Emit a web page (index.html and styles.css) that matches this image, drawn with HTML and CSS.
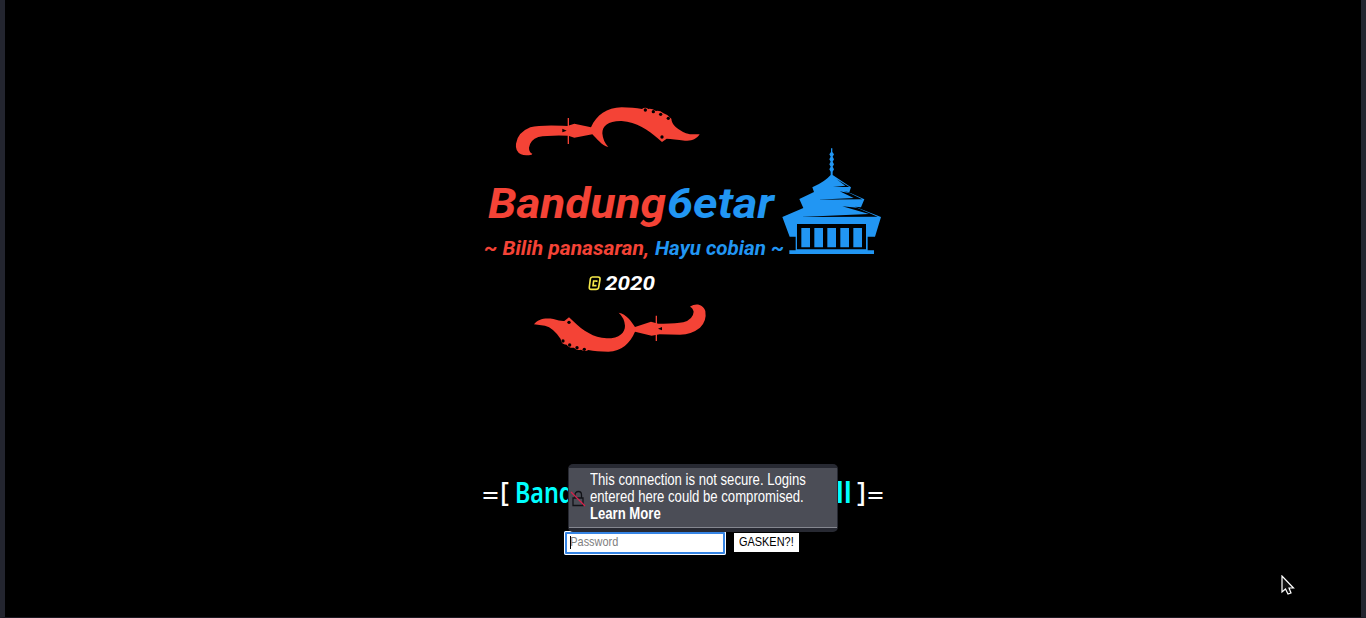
FILE: index.html
```html
<!DOCTYPE html>
<html lang="en">
<head>
<meta charset="utf-8">
<title>Bandung6etar</title>
<link rel="stylesheet" href="styles.css">
</head>
<body>
<main class="page">
  <svg class="logo" width="410" height="280" viewBox="478 90 410 280">
    <g transform="translate(505 95) scale(.33333)">
      <path class="red" d="M80 179Q60 183 48 178Q30 168 33 146Q38 112 76 97Q105 89 172 92L187 93L208 86L258 97C275 60 305 38 350 37Q385 37 411 42Q421 34 430 42Q440 40 453 48Q465 46 474 54Q488 58 499 71Q500 85 512 96Q530 112 555 118L584 118C575 132 560 139 540 137Q505 132 485 131L471 141L458 130C430 105 395 82 350 78C310 77 292 92 292 115Q294 140 310 156C290 152 275 130 262 118L208 128L190 122Q130 120 100 126Q75 135 72 158Q72 172 82 176Z"/>
      <path class="guard" d="M190 69V147"/>
      <g class="hole"><circle cx="421" cy="45" r="5"/><circle cx="445" cy="50" r="5"/><circle cx="467" cy="58" r="5"/><circle cx="490" cy="70" r="5"/><circle cx="471" cy="126" r="5"/><path d="M172 101L185 107L172 112Z"/></g>
    </g>
    <g class="wordmark">
      <text class="red" x="488" y="218" textLength="178" lengthAdjust="spacingAndGlyphs">Bandung</text>
      <text class="blue" x="667" y="218" textLength="107" lengthAdjust="spacingAndGlyphs">6etar</text>
    </g>
    <g class="tagline">
      <text class="red" x="484" y="255" textLength="165" lengthAdjust="spacingAndGlyphs">~ Bilih panasaran,</text>
      <text class="blue" x="655" y="255" textLength="129" lengthAdjust="spacingAndGlyphs">Hayu cobian ~</text>
      <text class="white" x="605" y="290" textLength="50" lengthAdjust="spacingAndGlyphs">2020</text>
    </g>
    <g class="copyright" transform="translate(480 232) scale(.33333)">
      <path d="M337 135H354Q361 135 360 142L356 166Q355 172 348 172H333Q327 172 328 165L331 141Q332 135 337 135Z"/>
      <path d="M350 150V147H341L339 161H347V158"/>
    </g>
    <g transform="translate(775 140) scale(.33333)">
      <path class="blue" d="M168 25H172V36L177 43L173 50L177 58L173 65L177 73L173 80L177 88L173 95V105L228 142L223 157L205 153L228 160L268 178L258 202L240 200L318 231L300 290H278V331H297V342H43V331H62V290H44L22 231L85 204L73 177L117 156L112 142Q150 125 167 105V95L163 88L167 80L163 73L167 65L163 58L167 50L163 43L168 36Z"/>
      <path class="hole" d="M184 117L223 141L174 141L211 137ZM194 154L225 160L262 178L125 179L236 174ZM202 199L246 203L308 230L75 231L282 222ZM66 252H273V328H66Z"/>
      <path class="blue" d="M79 264H105V322H79ZM118 264H144V322H118ZM157 264H183V322H157ZM196 264H222V322H196ZM235 264H261V322H235Z"/>
    </g>
    <g transform="translate(525 295) scale(.33333)">
      <path class="red" d="M27 88C38 72 60 68 85 72Q106 79 118 78L132 67L145 79C175 108 205 128 245 130C285 130 300 112 300 92Q298 68 281 53C305 58 318 78 330 96L378 80L400 86Q450 87 475 82Q505 72 506 50Q503 38 495 35C515 22 535 30 541 48Q546 78 525 98Q500 118 465 119L404 118L380 122L330 110C315 145 290 168 250 170Q215 170 190 165Q180 172 168 164Q155 168 147 158Q132 160 125 149Q108 149 107 132Q85 98 60 92Z"/>
      <path class="guard" d="M394 62V138"/>
      <g class="hole"><circle cx="132" cy="82" r="5"/><circle cx="114" cy="138" r="5"/><circle cx="134" cy="150" r="5"/><circle cx="156" cy="158" r="5"/><circle cx="178" cy="163" r="5"/><path d="M399 101L411 96V106Z"/></g>
    </g>
  </svg>
  <h1 class="title">
    <svg width="404" height="40" viewBox="481 474 404 40">
      <text class="white equals" x="482" y="504" textLength="17" lengthAdjust="spacingAndGlyphs">=</text>
      <text class="white bracket" x="500" y="502">[</text>
      <text class="name" x="515" y="503" textLength="163" lengthAdjust="spacingAndGlyphs">Bandung6etar</text>
      <text class="name" x="716" y="503" textLength="136" lengthAdjust="spacingAndGlyphs">Mini Shell</text>
      <text class="white bracket" x="857" y="502">]</text>
      <text class="white equals" x="867" y="504" textLength="17" lengthAdjust="spacingAndGlyphs">=</text>
    </svg>
  </h1>
  <form class="login">
    <div class="field">
      <input class="password" type="password" placeholder="Password">
      <i class="caret"></i>
      <div class="warning">
        <div class="warning-body">
          <svg class="lock" width="16" height="18" viewBox="0 0 16 18"><path d="M3 9H13V16.500H3ZM5 9V6Q5 2.500 8.500 2.500Q11.500 2.500 11.500 6V9" fill="none" stroke="#111217" stroke-width="1.300"/><path d="M1 3L15 17" stroke="#d7204a" stroke-width="1.300"/></svg>
          <p class="message">This connection is not secure. Logins<br>entered here could be compromised.<br><b>Learn More</b></p>
        </div>
      </div>
    </div>
    <button class="submit" type="button"><span class="label">GASKEN?!</span></button>
  </form>
  <svg class="cursor" width="14" height="21" viewBox="0 0 14 21"><path d="M1 1V17L4.500 14L7 19L10 18L8 13H12.500Z" fill="#101010" stroke="#fff" stroke-width="1.200"/></svg>
</main>
</body>
</html>
```
FILE: styles.css
```css
* { box-sizing: border-box; }
body { margin: 0; background: #000; font-family: "Liberation Sans", sans-serif; }
.page {
  position: relative;
  display: flex;
  flex-direction: column;
  align-items: center;
  height: 618px;
  padding-top: 90px;
  background: #000;
  border: solid #23252f;
  border-width: 0 5px 1px;
  border-bottom-color: #1b1922;
  overflow: hidden;
}
.logo { display: block; flex: none; }
.red { fill: #f44336; }
.blue { fill: #2196f3; }
.white { fill: #fff; }
.hole { fill: #000; }
.guard { stroke: #f44336; stroke-width: 4; }
.wordmark { font: italic bold 43px Roboto, sans-serif; }
.tagline { font: italic bold 20px Roboto, sans-serif; }
.copyright { fill: none; stroke: #f5e94a; stroke-width: 5; }
.title { margin: 104px 0 0; height: 40px; }
.title svg { display: block; overflow: visible; }
.equals { font: 500 26px "Noto Sans", sans-serif; }
.bracket { font: 500 27px "Noto Sans", sans-serif; }
.name { font: 600 28px "Noto Sans", sans-serif; fill: #0ff; }
.login { display: flex; align-items: flex-start; gap: 8px; margin: 17px 0 0 -4px; }
.field {
  position: relative;
  width: 162px;
  height: 24px;
  padding: 2px 3px;
  border-radius: 2px;
  outline: 1px solid #fff;
  outline-offset: -1px;
  background: #fff;
  box-shadow: inset 0 0 0 3px #3584e4;
}
.password {
  display: block;
  width: 188px;
  height: 16px;
  padding: 0 4px;
  border: 0;
  outline: 0;
  background: transparent;
  font: 13.333px "Liberation Sans", sans-serif;
  transform: scaleX(.82);
  transform-origin: left;
}
.password::placeholder { color: #808080; }
.caret { position: absolute; left: 6px; top: 5px; width: 1px; height: 13px; background: #000; }
.warning {
  position: absolute;
  left: 4px;
  top: -67px;
  width: 270px;
  height: 68px;
  padding: 4px 1px;
  border-radius: 5px;
  background: #272932;
}
.warning-body {
  display: flex;
  align-items: flex-start;
  height: 60px;
  padding: 3px 0 0 1px;
  border-bottom: 1px solid #858790;
  background: #4b4d56;
}
.lock { flex: none; margin: 18px 4px 0 0; }
.message {
  margin: 0;
  color: #fff;
  font-size: 16px;
  line-height: 17px;
  white-space: nowrap;
  transform: scaleX(.82);
  transform-origin: left;
}
.submit {
  display: flex;
  justify-content: center;
  width: 65px;
  height: 19px;
  margin-top: 2px;
  padding: 1px 0 0;
  border: 0;
  background: #fff;
  color: #000;
  font: 13.333px "Liberation Sans", sans-serif;
}
.label { transform: scaleX(.82); }
.cursor { position: absolute; left: 1276px; top: 575px; }
```
